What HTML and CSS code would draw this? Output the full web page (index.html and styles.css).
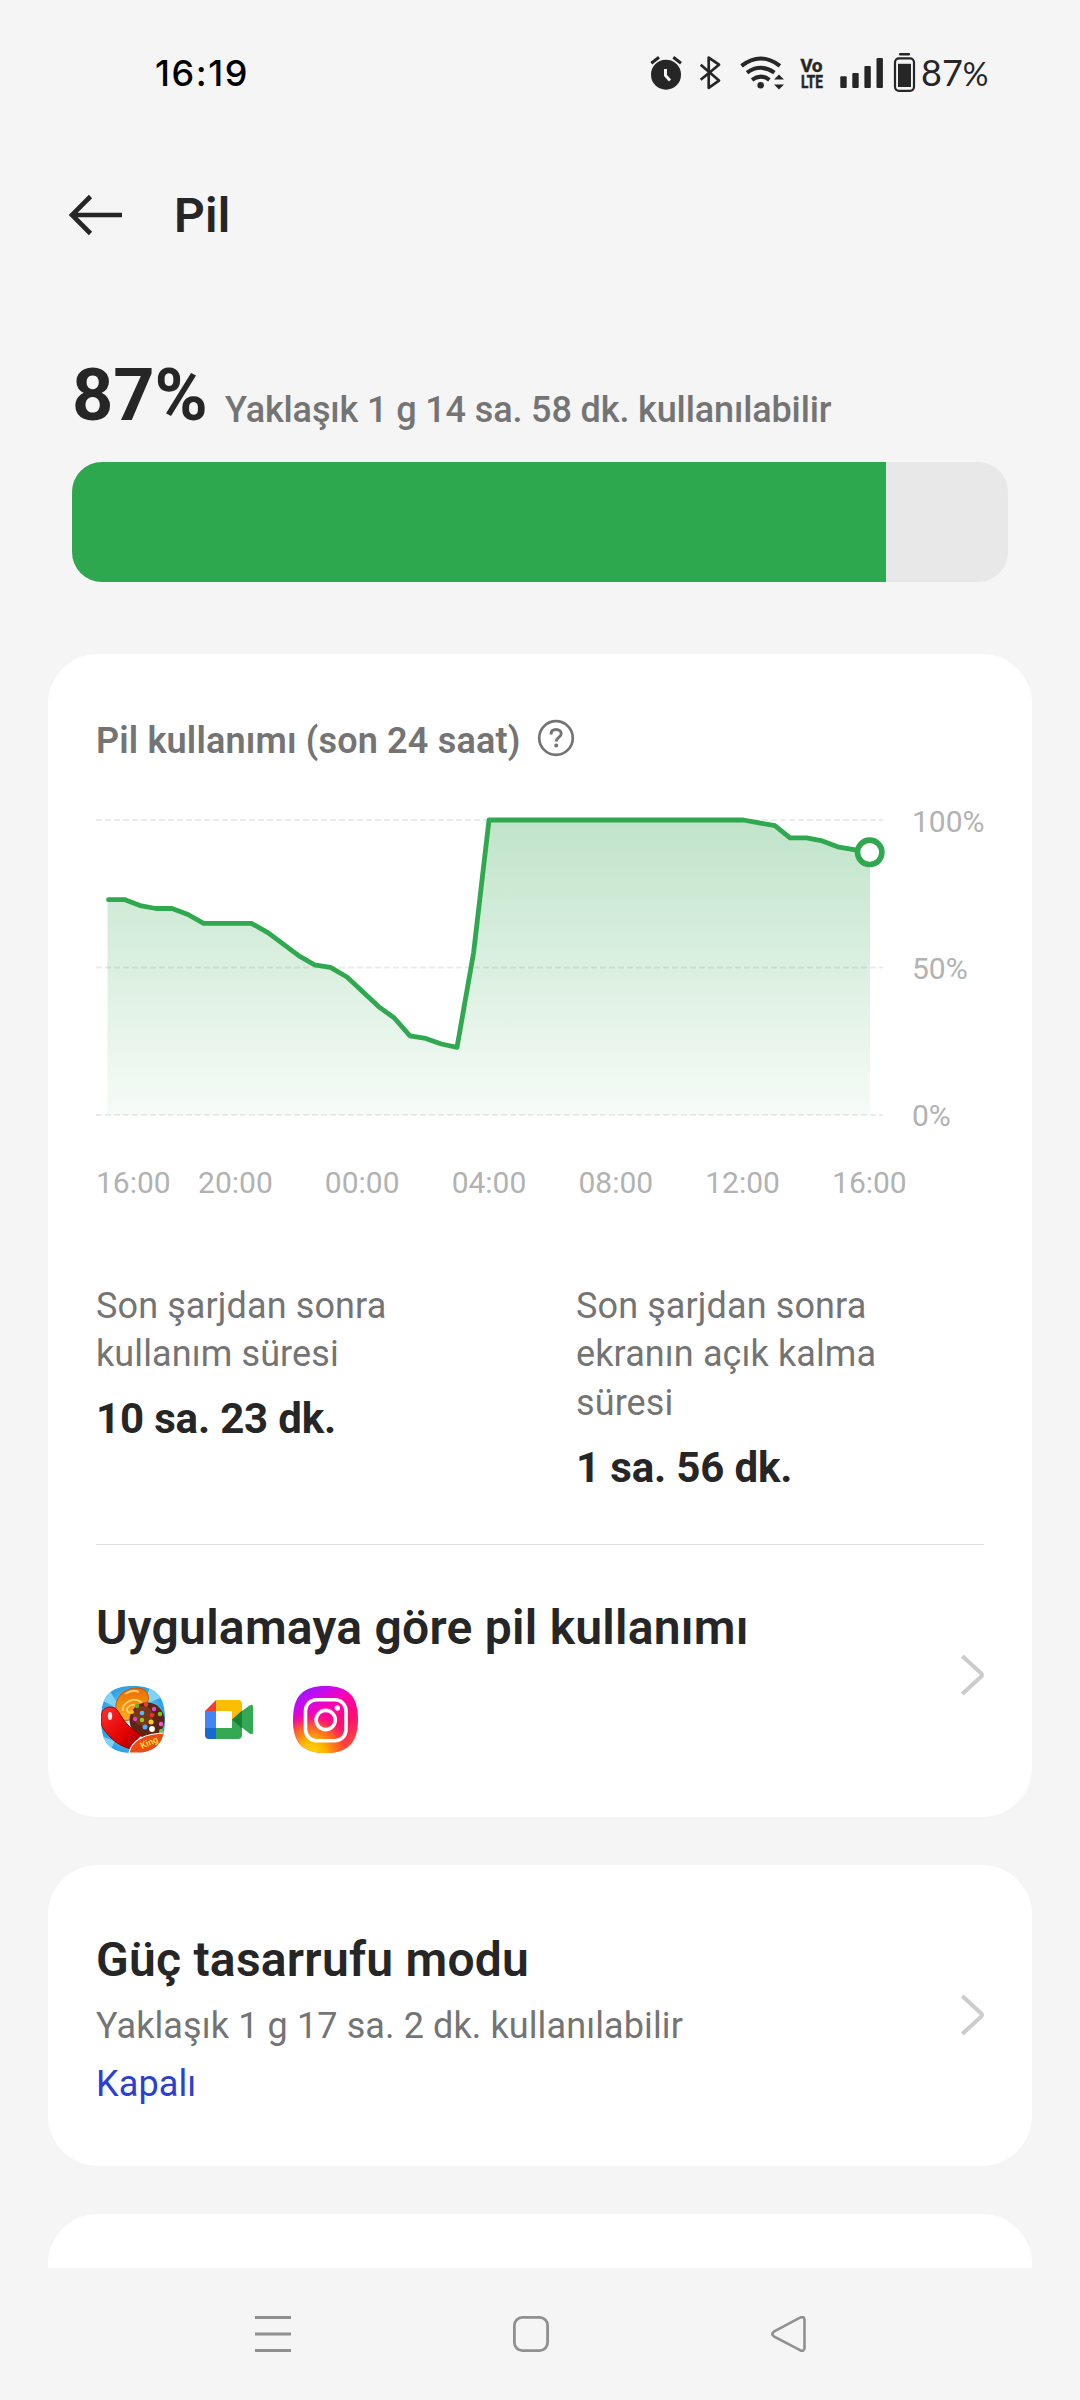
FILE: index.html
```html
<!DOCTYPE html>
<html lang="tr">
<head>
<meta charset="utf-8">
<title>Pil</title>
<link rel="stylesheet" href="styles.css">
</head>
<body>
<div class="screen">
  <div class="status">
    <span class="clock">16:19</span>
    <div class="status-icons">
      <svg width="50" height="44" viewBox="640 50 50 44"><circle cx="666" cy="73.7" r="15" fill="#262626"/><path d="M651.3 62.3l7.7-6M681 62.3l-7.7-6" stroke="#262626" stroke-width="3"/><path d="M665.5 68v6.5l4.5 5" fill="none" stroke="#f5f5f5" stroke-width="3"/></svg>
      <svg width="45" height="44" viewBox="690 50 45 44"><path d="M700.7 63.7L719 79.6l-10.3 7.2V56.6L719 63.7l-18.3 15" fill="none" stroke="#262626" stroke-width="2.7" stroke-linejoin="round"/></svg>
      <svg width="60" height="44" viewBox="735 50 60 44"><g fill="none" stroke="#262626" stroke-width="4"><path d="M741.5 64.8q19.2-14.6 38.4 0"/><path d="M747 71.6q13.7-9.6 27.4 0"/><path d="M752 78.8q8.7-6.4 17.4 0"/></g><circle cx="760.7" cy="84.3" r="3.3" fill="#262626"/><path d="M779 73.5l5 5h-10zM774 83.4h10l-5 5z" fill="#262626"/></svg>
      <svg width="35" height="44" viewBox="795 50 35 44"><g class="volte"><text x="800.5" y="71" textLength="22" lengthAdjust="spacingAndGlyphs">Vo</text><text x="801" y="86.7" textLength="22" lengthAdjust="spacingAndGlyphs">LTE</text></g></svg>
      <svg width="60" height="44" viewBox="830 50 60 44" fill="#262626"><rect x="840.3" y="75.2" width="6.4" height="11.8" rx="1"/><rect x="852.3" y="72" width="6.4" height="15" rx="1"/><rect x="864.4" y="65" width="6.4" height="22" rx="1"/><rect x="876.5" y="57" width="6.4" height="30" rx="1"/></svg>
      <svg width="30" height="44" viewBox="890 50 30 44" fill="#262626"><rect x="899" y="52" width="11" height="2.6" rx="1"/><rect x="895" y="57.3" width="19" height="32.5" rx="4" fill="none" stroke="#262626" stroke-width="2.2"/><rect x="898" y="62.8" width="13" height="23.2"/></svg>
    </div>
    <span class="charge">87<span class="pct">%</span></span>
  </div>

  <header class="header">
    <svg width="54" height="42" viewBox="69 194 54 42"><path d="M90.5 196.5L72 215l18.500 18.500M72.500 215H122" fill="none" stroke="#262626" stroke-width="4.600"/></svg>
    <h1 class="heading">Pil</h1>
  </header>

  <main class="content">
    <section class="summary">
      <div class="level">
        <span class="level-value">87%</span>
        <span class="level-text">Yaklaşık 1 g 14 sa. 58 dk. kullanılabilir</span>
      </div>
      <div class="bar"><div class="bar-fill" style="width:87%"></div></div>
    </section>

    <section class="card usage">
      <div class="usage-head">
        <span class="usage-title">Pil kullanımı (son 24 saat)</span>
        <svg class="help" width="38" height="38" viewBox="0 0 38 38"><circle cx="19" cy="19" r="16.800" fill="none" stroke="#747474" stroke-width="2.700"/><path d="M14 15.400c0-3.200 2.200-4.900 5.200-4.900 2.900 0 5 1.700 5 4.300 0 3.600-5 3.700-5 7.600" fill="none" stroke="#747474" stroke-width="2.900"/><circle cx="19.200" cy="26.600" r="2" fill="#747474"/></svg>
      </div>
      <div class="chart">
        <svg width="792" height="330" viewBox="96 800 792 330">
          <defs><linearGradient id="area" x1="0" y1="820" x2="0" y2="1115" gradientUnits="userSpaceOnUse"><stop offset="0" stop-color="#c0e4ca"/><stop offset="1" stop-color="#f6fbf7"/></linearGradient></defs>
          <path fill="url(#area)" d="M107.500 1115V899.700H125L140 905.600 156 908.500H172L188 914.500 203.600 923.300H251.400L267.900 932.600 299 955.900 314.300 964.800 330.400 967.400 347 977 362.500 991.400 378.600 1006.600 394.300 1018 410 1035.800 425.700 1038.400 441.400 1044 457 1047.300 473.600 952.600 489 820H743.200L774.900 825.700 790 837.900H806.600L822.400 840.900 837.600 846.800 870 852.300V1115z"/>
          <path d="M96 820H883M96 967.500H883M96 1115H883" fill="none" stroke="#000" stroke-opacity=".075" stroke-width="2" stroke-dasharray="6 3"/>
          <path fill="none" stroke="#2fa84f" stroke-width="4.800" stroke-linejoin="round" stroke-linecap="round" d="M108.500 899.700H125L140 905.600 156 908.500H172L188 914.500 203.600 923.300H251.400L267.900 932.600 299 955.900 314.300 964.800 330.400 967.400 347 977 362.500 991.400 378.600 1006.600 394.300 1018 410 1035.800 425.700 1038.400 441.400 1044 457 1047.300 473.600 952.600 489 820H743.200L774.900 825.700 790 837.900H806.600L822.400 840.900 837.600 846.800 870 852.300"/>
          <circle cx="869.700" cy="852.300" r="12.200" fill="#fff" stroke="#2fa84f" stroke-width="5.600"/>
        </svg>
        <div class="y-axis"><span>100%</span><span>50%</span><span>0%</span></div>
      </div>
      <div class="x-axis"><span>16:00</span><span>20:00</span><span>00:00</span><span>04:00</span><span>08:00</span><span>12:00</span><span>16:00</span></div>
      <div class="stats">
        <div class="stat"><p class="stat-label">Son şarjdan sonra<br>kullanım süresi</p><p class="stat-value">10 sa. 23 dk.</p></div>
        <div class="stat"><p class="stat-label">Son şarjdan sonra<br>ekranın açık kalma<br>süresi</p><p class="stat-value">1 sa. 56 dk.</p></div>
      </div>
      <div class="row apps">
        <div>
          <h2 class="title">Uygulamaya göre pil kullanımı</h2>
          <div class="app-icons">
            <svg width="64" height="67" viewBox="0 0 64 67">
              <defs><clipPath id="squircle"><path d="M32 0C55 0 64 10 64 33.500S55 67 32 67 0 57 0 33.500 9 0 32 0z"/></clipPath>
              <radialGradient id="sky"><stop offset="0" stop-color="#d5f4ff"/><stop offset="1" stop-color="#2ba3e6"/></radialGradient>
              <linearGradient id="bean" x1="0" y1="0" x2="1" y2="1"><stop offset="0" stop-color="#ff3030"/><stop offset=".6" stop-color="#e30000"/><stop offset="1" stop-color="#990000"/></linearGradient>
              <linearGradient id="candy" x1="0" y1="0" x2="0" y2="1"><stop offset="0" stop-color="#e86c00"/><stop offset="1" stop-color="#ffb01f"/></linearGradient></defs>
              <g clip-path="url(#squircle)">
                <rect width="64" height="67" fill="url(#sky)"/>
                <path d="M0 14l20 10L8 3M50 0L40 20 64 10M0 50l14 5-6 12" fill="#7fd3f7"/>
                <path d="M15 23C14 10 24 2 36 2c11 0 14 9 9 18-5 10-16 16-23 14-4-1-6-5-7-11z" fill="url(#candy)" stroke="#c75400"/>
                <path d="M22 25c-1-9 11-14 18-9 4 5-7 14-13 10-4-4 4-9 8-6" fill="none" stroke="#ffd16a" stroke-width="1.800"/>
                <path d="M24 8q8-5 14-2" stroke="#ffc46b" stroke-width="2" fill="none"/>
                <circle cx="46" cy="34" r="17.500" fill="#5b2512"/><circle cx="42" cy="30" r="10" fill="#783719"/>
                <g><circle cx="36" cy="20" r="2.200" fill="#62bb16"/><circle cx="45" cy="18.500" r="2.200" fill="#f43b2f"/><circle cx="53" cy="23" r="2.200" fill="#d850d5"/><circle cx="31" cy="26" r="2" fill="#fdc810"/><circle cx="41" cy="27" r="2.300" fill="#5ab8ff"/><circle cx="51" cy="29" r="2.300" fill="#f22d2c"/><circle cx="59" cy="28" r="2.200" fill="#73ca27"/><circle cx="34" cy="33" r="2.200" fill="#dd43c5"/><circle cx="41" cy="34" r="2.200" fill="#8fce1c"/><circle cx="50" cy="36" r="2.500" fill="#ffd021"/><circle cx="60" cy="38" r="2.200" fill="#f45ad0"/><circle cx="44" cy="41" r="2.500" fill="#4aaeff"/><circle cx="51" cy="43" r="2.900" fill="#fff"/><circle cx="60" cy="45" r="2" fill="#77ca2e"/></g>
                <path d="M0 32c0-7 4-11 9-11 7 0 9 6 13 12 5 7 11 12 18 15L30 63C16 60 4 48 0 38z" fill="url(#bean)" stroke="#9e0000"/>
                <ellipse cx="9" cy="30" rx="2.200" ry="4" fill="#fff" opacity=".9"/>
                <path d="M28 67c2-12 15-20 37-20v20z" fill="#ed4b12" stroke="#fff" stroke-width="1.200"/>
                <text x="40" y="62" class="king" transform="rotate(-24 43 60)">King</text>
              </g>
            </svg>
            <svg width="48" height="39" viewBox="0 0 48 39"><path d="M11 0v11H0z" fill="#e94235"/><path d="M11 0h22q4 0 4 4v9l-10 7v-9H11z" fill="#fbbc04"/><path d="M0 11h11v17H0z" fill="#4285f4"/><path d="M0 28h11v11H4q-4 0-4-4z" fill="#1967d2"/><path d="M11 28h16v-9l10 6v10q0 4-4 4H11z" fill="#34a853"/><path d="M27 19.500l10-9v18z" fill="#188038"/><path d="M37 11l7.500-5.500Q48 3.500 48 7v25q0 3.500-3.500 1.500L37 27.500z" fill="#34a853"/></svg>
            <svg width="65" height="67" viewBox="0 0 65 67">
              <defs><linearGradient id="ig-a" x1=".1" y1="0" x2=".7" y2="1"><stop offset="0" stop-color="#8a19ff"/><stop offset=".2" stop-color="#c20cf2"/><stop offset=".42" stop-color="#ff00b0"/><stop offset=".7" stop-color="#ff0e70"/><stop offset="1" stop-color="#ff4b35"/></linearGradient>
              <radialGradient id="ig-b" cx=".28" cy="1.020" r=".62"><stop offset="0" stop-color="#ffe000"/><stop offset=".35" stop-color="#ffb400"/><stop offset=".7" stop-color="#ff6820" stop-opacity=".85"/><stop offset="1" stop-color="#ff2060" stop-opacity="0"/></radialGradient></defs>
              <path d="M32.500 0C55 0 65 10 65 33.500S55 67 32.500 67 0 57 0 33.500 10 0 32.500 0z" fill="url(#ig-a)"/>
              <path d="M32.500 0C55 0 65 10 65 33.500S55 67 32.500 67 0 57 0 33.500 10 0 32.500 0z" fill="url(#ig-b)"/>
              <rect x="12.500" y="13.700" width="40.500" height="41" rx="11" fill="none" stroke="#fff" stroke-width="3.600"/><circle cx="32.700" cy="34" r="9.600" fill="none" stroke="#fff" stroke-width="3.600"/><circle cx="44.300" cy="22" r="2.700" fill="#fff"/>
            </svg>
          </div>
        </div>
        <svg class="chevron" width="24" height="42" viewBox="0 0 24 42"><path d="M2.300 2L21 19.200q2 1.800 0 3.600L2.300 40" fill="none" stroke="#ccc" stroke-width="4"/></svg>
      </div>
    </section>

    <section class="card row saver">
      <div>
        <h2 class="title">Güç tasarrufu modu</h2>
        <p class="desc">Yaklaşık 1 g 17 sa. 2 dk. kullanılabilir</p>
        <p class="state">Kapalı</p>
      </div>
      <svg class="chevron" width="24" height="42" viewBox="0 0 24 42"><path d="M2.300 2L21 19.200q2 1.800 0 3.600L2.300 40" fill="none" stroke="#ccc" stroke-width="4"/></svg>
    </section>
    <section class="card next"></section>
  </main>

  <nav class="nav">
    <svg width="36" height="36" viewBox="0 0 36 36"><path d="M0 1.500h36M0 18h36M0 34.500h36" stroke="#909090" stroke-width="3"/></svg>
    <svg width="36" height="36" viewBox="0 0 36 36"><rect x="1.400" y="1.400" width="33.200" height="33.200" rx="8" fill="none" stroke="#909090" stroke-width="2.800"/></svg>
    <svg width="36" height="36" viewBox="0 0 36 36"><path d="M2.800 15.700L29 1.600q4.200-1.600 4.500 2v28.600q-.3 3.800-4.500 2L2.800 20.300q-3-2.300 0-4.600z" fill="none" stroke="#909090" stroke-width="2.600"/></svg>
  </nav>
</div>
</body>
</html>
```
FILE: styles.css
```css
* { box-sizing: border-box; margin: 0; padding: 0; }
body { background: #f5f5f5; font-family: Roboto, "Noto Sans", sans-serif; color: #262626; }
svg { display: block; flex: none; }
.screen { width: 1080px; height: 2400px; display: flex; flex-direction: column; overflow: hidden; }

.status { height: 146px; padding-left: 155px; display: flex; align-items: center; flex: none; }
.clock { width: 485px; font: 500 36px/44px Inter, sans-serif; letter-spacing: 1.6px; color: #000; }
.status-icons { display: flex; }
.charge { font: 400 36px/44px Lato, sans-serif; padding-left: 1px; }
.pct { font-size: 32px; }
.volte { font: 700 17.500px Roboto, sans-serif; fill: #262626; stroke: #262626; stroke-width: .5px; }

.header { height: 138px; padding-left: 69px; display: flex; align-items: center; gap: 51px; flex: none; }
.heading { font-size: 48px; line-height: 56px; font-weight: 600; letter-spacing: .3px; padding-top: 1px; }

.content { flex: 1; min-height: 0; overflow: hidden; padding: 69px 48px 0; display: flex; flex-direction: column; }
.summary { padding: 0 24px; flex: none; }
.level { display: flex; align-items: flex-start; height: 84px; white-space: nowrap; }
.level-value { font-size: 72px; line-height: 84px; font-weight: 700; width: 153px; padding-top: 1px; }
.level-text { margin-top: 33px; font-size: 36px; line-height: 48px; font-weight: 500; letter-spacing: -.13px; color: #747474; }
.bar { margin-top: 25px; height: 120px; border-radius: 30px; background: #e8e8e8; overflow: hidden; }
.bar-fill { height: 100%; background: #2ea84f; }

.card { background: #fff; border-radius: 50px; padding: 0 48px; flex: none; }
.usage { margin-top: 72px; height: 1163px; padding-top: 63px; }
.usage-head { display: flex; align-items: center; gap: 18px; height: 48px; }
.usage-title { width: 423px; font-size: 36px; line-height: 48px; font-weight: 600; letter-spacing: .17px; white-space: nowrap; color: #747474; }
.help { margin-top: -6px; }
.chart { margin-top: 35px; display: flex; gap: 24px; height: 334px; }
.y-axis { height: 330px; margin-top: 4px; display: flex; flex-direction: column; justify-content: space-between; font-size: 30px; line-height: 36px; color: #b2b2b2; }
.x-axis { margin-top: 31px; display: flex; height: 36px; font-size: 30px; line-height: 36px; color: #b2b2b2; }
.x-axis span { width: 126.800px; text-align: center; flex: none; }
.x-axis span:first-child { width: 76px; text-align: left; }
.stats { margin-top: 80.500px; display: flex; height: 210.500px; }
.stat { width: 480px; flex: none; }
.stat-label { font-size: 36px; line-height: 48.700px; letter-spacing: .11px; color: #747474; }
.stat-value { margin-top: 15px; font-size: 42px; line-height: 50px; font-weight: 700; letter-spacing: -.16px; }
.row { display: flex; justify-content: space-between; }
.apps { margin-top: 52px; border-top: 1px solid #dcdcdc; padding-top: 55px; }
.title { font-size: 48px; line-height: 56px; font-weight: 600; letter-spacing: .25px; }
.app-icons { margin: 30px 0 0 5px; display: flex; align-items: center; gap: 40px; }
.apps .chevron { margin-top: 54px; }

.saver { margin-top: 48px; height: 301px; padding-top: 67px; }
.saver .chevron { margin-top: 62px; }
.desc { margin-top: 14px; font-size: 36px; line-height: 48px; letter-spacing: .11px; color: #747474; }
.state { margin-top: 10px; font-size: 36px; line-height: 48px; letter-spacing: .11px; color: #2b3fd6; }
.next { margin-top: 48px; height: 300px; }

.nav { height: 132px; flex: none; display: flex; align-items: center; gap: 222px; padding-left: 255px; }
.king { font: 700 9px Roboto, sans-serif; fill: #ffd83d; }
```
